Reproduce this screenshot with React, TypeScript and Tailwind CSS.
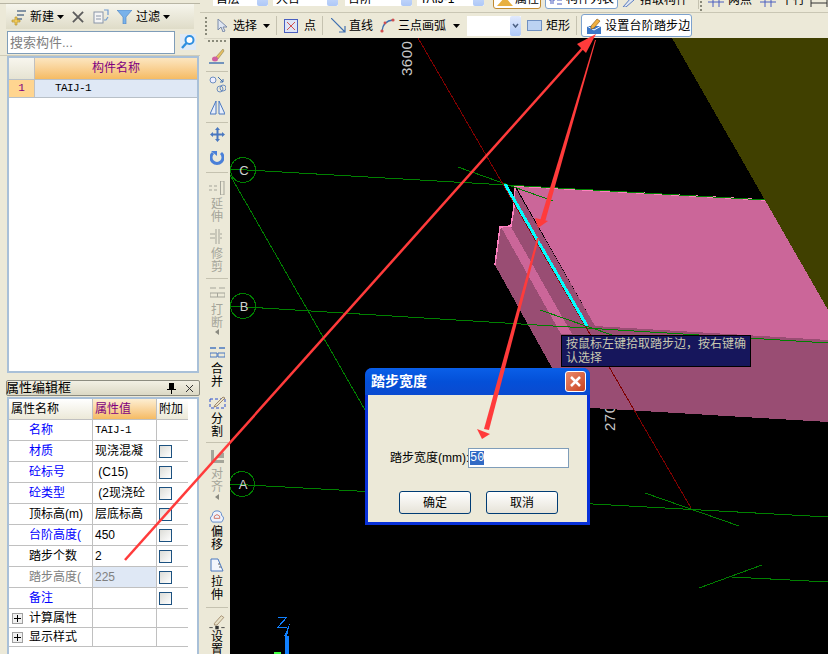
import React from "react";

const Caret = ({ className = "" }: { className?: string }) => (
  <svg width="7" height="4" viewBox="0 0 7 4" className={className}>
    <path d="M0 0h7L3.5 4z" fill="#000" />
  </svg>
);

const Sep = ({ className = "" }: { className?: string }) => <div className={`w-px self-stretch my-[3px] bg-[#c5c2b0] ${className}`} />;

const Grip = () => (
  <svg width="3" height="18" viewBox="0 0 3 18" className="shrink-0">
    {[0, 4, 8, 12, 16].map((y) => (
      <rect key={y} x="0" y={y} width="2" height="2" fill="#8a8a7a" />
    ))}
  </svg>
);

const Combo = ({ text, className }: { text: string; className: string }) => (
  <div className={`h-[20px] bg-white flex items-end justify-between text-[12px] leading-[14px] pl-[3px] ${className}`}>
    <span>{text}</span>
    <div className="w-[11px] h-full bg-gradient-to-b from-[#e1eafe] to-[#aec8f7] rounded-[2px] flex items-center justify-center">
      <svg width="7" height="5" viewBox="0 0 7 5"><path d="M1 1l2.5 3L6 1" fill="none" stroke="#4d6185" strokeWidth="1.5" /></svg>
    </div>
  </div>
);

const Check = () => (
  <div className="w-[13px] h-[13px] border border-[#1c5180] bg-gradient-to-br from-[#dcdcd7] to-white" />
);

const rows: { name: string; value: string; blue?: boolean; check?: boolean; grey?: boolean; mono?: boolean }[] = [
  { name: "名称", value: "TAIJ-1", blue: true, mono: true },
  { name: "材质", value: "现浇混凝", blue: true, check: true },
  { name: "砼标号", value: " (C15)", blue: true, check: true },
  { name: "砼类型", value: " (2现浇砼", blue: true, check: true },
  { name: "顶标高(m)", value: "层底标高", check: true },
  { name: "台阶高度(", value: "450", blue: true, check: true },
  { name: "踏步个数", value: "2", check: true },
  { name: "踏步高度(", value: "225", check: true, grey: true },
  { name: "备注", value: "", blue: true, check: true },
];

const PropPanel = () => (
  <div className="ml-[7px] mr-[1px] flex-1 bg-white border-2 border-b-0 border-[#a9c0d8] text-[12px] overflow-hidden">
    <div className="w-[179px]">
      <div className="flex h-[21px] border-b border-[#c0c0c0]">
        <div className="w-[84px] border-r border-[#c0c0c0] bg-gradient-to-b from-white to-[#ece9d8] pl-[2px] leading-[20px]">属性名称</div>
        <div className="w-[64px] border-r border-[#c0c0c0] bg-gradient-to-b from-[#fdeed2] to-[#f5bb62] pl-[2px] leading-[20px] text-[#800080]">属性值</div>
        <div className="w-[31px] bg-gradient-to-b from-white to-[#ece9d8] pl-[2px] leading-[20px]">附加</div>
      </div>
      {rows.map((r) => (
        <div key={r.name} className="flex h-[21px] border-b border-[#c0c0c0]">
          <div className={`w-[84px] border-r border-[#c0c0c0] pl-[20px] leading-[20px] overflow-hidden whitespace-nowrap ${r.blue ? "text-[#0000ff]" : r.grey ? "text-[#808080]" : "text-black"}`}>{r.name}</div>
          <div className={`w-[64px] border-r border-[#c0c0c0] pl-[2px] leading-[20px] whitespace-pre overflow-hidden ${r.grey ? "bg-[#dfe8f5] text-[#808080]" : "text-black"} ${r.mono ? "font-['Liberation_Mono',monospace] text-[11px] tracking-[-0.6px]" : ""}`}>{r.value}</div>
          <div className="w-[31px] flex items-center pl-[2px]">{r.check && <Check />}</div>
        </div>
      ))}
      {["计算属性", "显示样式"].map((t) => (
        <div key={t} className="flex h-[19px] border-b border-[#c0c0c0]">
          <div className="w-[84px] border-r border-[#c0c0c0] pl-[3px] flex items-center gap-[6px] leading-[18px]">
            <div className="w-[11px] h-[11px] border border-[#a0a0a0] bg-[#f0f0f0] flex items-center justify-center">
              <svg width="7" height="7" viewBox="0 0 7 7"><path d="M0 3.5h7M3.5 0v7" stroke="#000" /></svg>
            </div>
            <span>{t}</span>
          </div>
          <div className="w-[64px] border-r border-[#c0c0c0]" />
          <div className="w-[31px]" />
        </div>
      ))}
    </div>
  </div>
);

const LeftPanel = () => (
  <div className="w-[200px] shrink-0 flex flex-col h-full">
    <div className="h-[4px] border-b border-[#b8b5a4]" />
    <div className="h-[25px] mx-[6px] flex items-center bg-gradient-to-b from-[#f6f5ec] to-[#dfdcc8] text-[12px]">
      <svg width="18" height="18" viewBox="0 0 18 18" className="ml-[4px]">
        <path d="M7 3h9M7 7h7M7 11h5" stroke="#5f7690" strokeWidth="1.5" />
        <path d="M2 12h3v-3h2v3h3v2H7v3H5v-3H2z" fill="#f0cb5e" stroke="#b08a20" strokeWidth=".6" />
      </svg>
      <span className="ml-[2px]">新建</span>
      <Caret className="ml-[3px]" />
      <svg width="12" height="12" viewBox="0 0 13 13" className="ml-[8px]"><path d="M1 1l11 11M12 1L1 12" stroke="#5c5c5c" strokeWidth="2" /></svg>
      <svg width="16" height="15" viewBox="0 0 16 15" className="ml-[9px]">
        <rect x="1" y="3" width="9" height="11" fill="#f4f4f4" stroke="#8a96a8" />
        <path d="M3 7h5M3 10h5" stroke="#8a96a8" />
        <path d="M11 1h4v5M15 8l-2 3h-2" fill="none" stroke="#6f9ad0" strokeWidth="1.2" />
      </svg>
      <svg width="15" height="14" viewBox="0 0 15 14" className="ml-[8px]"><path d="M0 0h15L9 7v7H6V7z" fill="#79b2ea" stroke="#4a7fc0" strokeWidth=".6" /></svg>
      <span className="ml-[4px]">过滤</span>
      <Caret className="ml-[3px]" />
    </div>
    <div className="h-[27px] pl-[7px] flex items-center border-b border-[#cfccb9]">
      <div className="w-[168px] h-[23px] bg-white border border-[#7f9db9] text-[#808080] text-[13px] leading-[21px] pl-[2px]">搜索构件...</div>
      <svg width="16" height="16" viewBox="0 0 16 16" className="ml-[5px]">
        <rect width="16" height="16" fill="#dfeaf6" />
        <circle cx="9.5" cy="6" r="4" fill="#fff" stroke="#2f8fe0" strokeWidth="2" />
        <path d="M6.5 9L2 14" stroke="#2f8fe0" strokeWidth="2.4" />
      </svg>
    </div>
    <div className="ml-[7px] mr-[1px] h-[317px] bg-white border-2 border-[#a9c0d8] text-[12px]">
      <div className="flex h-[21px]">
        <div className="w-[26px] bg-gradient-to-b from-[#f8f6ee] to-[#e6e3d2] border-r border-[#c0c0c0]" />
        <div className="flex-1 bg-gradient-to-b from-[#fce6c0] to-[#f5bb62] text-center text-[#800080] leading-[21px]">构件名称</div>
      </div>
      <div className="flex h-[19px] border-t border-b border-[#b8c0c8]">
        <div className="w-[26px] bg-[#ffd590] text-[#800080] text-center border-r border-[#c0c0c0] font-['Liberation_Mono',monospace] text-[11px] leading-[17px]">1</div>
        <div className="flex-1 bg-[#dfe8f5] pl-[20px] font-['Liberation_Mono',monospace] text-[11px] tracking-[-0.6px] leading-[17px]">TAIJ-1</div>
      </div>
    </div>
    <div className="ml-[6px] mt-[7px] h-[16px] border border-[#8c8c80] rounded-[2px] bg-gradient-to-b from-[#f2f0e4] to-[#dcd9c5] flex items-center text-[13px] leading-[14px]">
      <span className="flex-1 -ml-px">属性编辑框</span>
      <svg width="9" height="11" viewBox="0 0 9 11" className="mr-[9px]"><path d="M2 0h5v6h2v1H5v4H4V7H0V6h2z" fill="#000" /></svg>
      <svg width="9" height="9" viewBox="0 0 9 9" className="mr-[5px]"><path d="M1 1l7 7M8 1L1 8" stroke="#333" /></svg>
    </div>
    <div className="h-[1px]" />
    <PropPanel />
  </div>
);

const Top1 = () => (
  <div className="h-[13px] border-b border-[#c9c6b4] overflow-hidden">
    <div className="flex items-start -mt-[14px] h-[26px] text-[12px] leading-[14px]">
      <Combo text="首层" className="ml-[13px] w-[55px]" />
      <Combo text="大台" className="ml-[5px] w-[65px]" />
      <Combo text="台阶" className="ml-[7px] w-[67px]" />
      <Combo text="TAIJ-1" className="ml-[5px] w-[67px]" />
      <div className="ml-[9px] w-[48px] h-[23px] bg-white border border-[#c08a30] rounded-[3px] flex items-end pb-[2px] pl-[3px]">
        <svg width="16" height="9" viewBox="0 0 16 9"><path d="M0 9l8-9 8 9z" fill="#e8b040" /></svg>
        <span className="ml-[2px]">属性</span>
      </div>
      <div className="ml-[4px] w-[73px] h-[23px] bg-white border border-[#7da2ce] rounded-[3px] flex items-end pb-[2px] pl-[3px]">
        <svg width="14" height="9" viewBox="0 0 14 9"><path d="M1 0h4v4H1zM8 0h5M8 3h5M1 6h4M8 7h5" stroke="#4a5fc0" fill="none" /></svg>
        <span className="ml-[3px]">构件列表</span>
      </div>
      <div className="ml-[4px] w-[76px] h-[23px] flex items-end pb-[2px]">
        <svg width="14" height="9" viewBox="0 0 14 9"><path d="M1 9l8-9 3 2-8 7z" fill="#dfe6f2" stroke="#5b7cc0" /></svg>
        <span className="ml-[4px]">拾取构件</span>
      </div>
      <Sep className="ml-0" />
      <span className="ml-[1px] mt-[15px]"><Grip /></span>
      <div className="ml-[5px] w-[16px] h-[23px] flex items-end pb-[2px]"><svg width="16" height="8" viewBox="0 0 16 8"><path d="M0 3h16M5 0v8M11 0v8" stroke="#4a5fc0" /></svg></div>
      <div className="ml-[4px] h-[23px] flex items-end pb-[2px]">两点</div>
      <div className="ml-[8px] w-[16px] h-[23px] flex items-end pb-[2px]"><svg width="16" height="8" viewBox="0 0 16 8"><path d="M0 3h16M5 0v8M11 0v8" stroke="#4a5fc0" /></svg></div>
      <div className="ml-[5px] h-[23px] flex items-end pb-[2px]">平行</div>
      <div className="ml-[5px] w-[18px] h-[23px] flex items-end pb-[2px]"><svg width="18" height="8" viewBox="0 0 18 8"><path d="M1 0v8M17 0v8M1 4h16" stroke="#333" /></svg></div>
    </div>
  </div>
);

const Top2 = () => (
  <div className="h-[25px] flex items-center text-[12px] pl-[5px]">
    <Grip />
    <svg width="10" height="13" viewBox="0 0 10 13" className="ml-[9px]"><path d="M1 0v11l3-3 2 5 2-1-2-4h4z" fill="#dfe6f2" stroke="#7b8aa8" /></svg>
    <span className="ml-[6px]">选择</span>
    <Caret className="ml-[6px]" />
    <Sep className="ml-[6px]" />
    <svg width="14" height="14" viewBox="0 0 14 14" className="ml-[7px]">
      <rect x=".5" y=".5" width="13" height="13" fill="#dde4f6" stroke="#4a5fc0" />
      <path d="M3 3l8 8M11 3l-8 8" stroke="#d05050" />
    </svg>
    <span className="ml-[6px]">点</span>
    <Sep className="ml-[6px]" />
    <svg width="15" height="15" viewBox="0 0 15 15" className="ml-[8px]"><path d="M0 0l14 14M14 8v6H8" fill="none" stroke="#3e6fb0" strokeWidth="1.2" /></svg>
    <span className="ml-[3px]">直线</span>
    <svg width="15" height="15" viewBox="0 0 15 15" className="ml-[7px]">
      <path d="M2 13Q3 3 13 2" fill="none" stroke="#3e6fb0" strokeWidth="1.3" />
      <circle cx="2" cy="13" r="1.6" fill="#d05050" /><circle cx="13" cy="2" r="1.6" fill="#d05050" /><circle cx="5" cy="5" r="1.4" fill="#d05050" />
    </svg>
    <span className="ml-[3px]">三点画弧</span>
    <Caret className="ml-[7px]" />
    <Combo text="" className="ml-[7px] w-[54px]" />
    <svg width="15" height="11" viewBox="0 0 15 11" className="ml-[6px]"><rect x=".5" y=".5" width="14" height="10" fill="#bcd2f2" stroke="#6f8fc0" /></svg>
    <span className="ml-[4px]">矩形</span>
    <Sep className="ml-[6px]" />
    <div className="ml-[4px] w-[111px] h-[23px] bg-white border border-[#7da2ce] rounded-[3px] flex items-center pl-[5px]">
      <svg width="14" height="16" viewBox="0 0 14 16">
        <rect x="0" y="8" width="14" height="8" fill="#3c78c8" />
        <path d="M0 8l7 4 7-4" fill="none" stroke="#fff" />
        <path d="M4 8l6-7 3 2-6 7-3 1z" fill="#f0b040" stroke="#805010" strokeWidth=".6" />
      </svg>
      <span className="ml-[4px] whitespace-nowrap tracking-[0.2px]">设置台阶踏步边</span>
    </div>
  </div>
);

const VChars = ({ text, muted, className = "" }: { text: string; muted?: boolean; className?: string }) => (
  <div className={`flex flex-col items-center text-[12px] leading-[12.5px] ${muted ? "text-[#a5a59a]" : "text-black"} ${className}`}>
    {text.split("").map((c) => (
      <span key={c}>{c}</span>
    ))}
  </div>
);

const VSep = ({ className }: { className: string }) => <div className={`h-px w-[22px] shrink-0 bg-[#c5c2b0] ${className}`} />;

const VCaret = ({ className }: { className: string }) => (
  <svg width="4" height="6" viewBox="0 0 4 6" className={className}><path d="M4 0v6L0 3z" fill="#8a8a80" /></svg>
);

const SideBar = () => (
  <div className="w-[26px] shrink-0 flex flex-col items-center overflow-hidden h-full border-t border-[#d8d5c4] [&>*]:shrink-0">
    <div className="mt-[1px] flex gap-[2px]">
      {[0, 1, 2, 3, 4].map((i) => (<div key={i} className="w-[2px] h-[2px] bg-[#8a8a7a]" />))}
    </div>
    <svg width="16" height="16" viewBox="0 0 16 16" className="mt-[6px]">
      <path d="M14 1L7 9l2 2 6-8z" fill="#e8c060" stroke="#8a8050" strokeWidth=".6" />
      <ellipse cx="6" cy="11" rx="3" ry="2.5" fill="#d060a0" />
      <path d="M0 15h15" stroke="#3e6fb0" strokeWidth="1.4" />
    </svg>
    <VSep className="mt-[7px]" />
    <svg width="17" height="17" viewBox="0 0 17 17" className="mt-[4px]">
      <circle cx="4" cy="4" r="3" fill="#eef" stroke="#6f8fc0" /><circle cx="11" cy="13" r="3" fill="none" stroke="#6f8fc0" /><circle cx="14" cy="12" r="3" fill="none" stroke="#6f8fc0" />
      <path d="M9 1l5 5M14 3v3h-3" fill="none" stroke="#3e6fb0" />
    </svg>
    <svg width="15" height="14" viewBox="0 0 15 14" className="mt-[8px]">
      <path d="M6 0v13H0zM9 0v13h6z" fill="#e8eefa" stroke="#4a78c0" />
    </svg>
    <VSep className="mt-[7px]" />
    <svg width="15" height="15" viewBox="0 0 15 15" className="mt-[4px]">
      <path d="M7.5 0l2.5 3H8.500v3.500H12V5l3 2.500L12 10V8.500H8.500V12H10l-2.500 3L5 12h1.500V8.500H3V10L0 7.500 3 5v1.500h3.500V3H5z" fill="#4a78c0" />
    </svg>
    <svg width="14" height="14" viewBox="0 0 14 14" className="mt-[9px]">
      <path d="M3 2A6 6 0 1 0 11 2" fill="none" stroke="#4a80d8" strokeWidth="3" /><path d="M1 0h6v5z" fill="#4a80d8" />
    </svg>
    <VSep className="mt-[7px]" />
    <svg width="16" height="14" viewBox="0 0 16 14" className="mt-[8px]">
      <path d="M11.500 0v14M15 0v14M11.500 0H15M11.500 14H15M0 5h3M5 5h3M0 9h3M5 9h3" stroke="#a5a59a" fill="none" />
    </svg>
    <VChars text="延伸" muted className="mt-[3px]" />
    <svg width="15" height="15" viewBox="0 0 15 15" className="mt-[6px]">
      <path d="M6 0v15M9 0v15M0 5h5M10 5h2M0 9h5M10 9h2" stroke="#a5a59a" fill="none" />
    </svg>
    <VChars text="修剪" muted className="mt-[4px]" />
    <VSep className="mt-[5px]" />
    <svg width="15" height="12" viewBox="0 0 15 12" className="mt-[7px]">
      <path d="M0 2h6M15 2H9M0 7h15v4H0zM7.500 7v4" stroke="#a5a59a" fill="none" />
    </svg>
    <VChars text="打断" muted className="mt-[6px]" />
    <VCaret className="mt-0" />
    <svg width="15" height="12" viewBox="0 0 15 12" className="mt-[11px]">
      <path d="M0 2h6M15 2H9" stroke="#4a78c0" strokeWidth="1.500" /><path d="M0 7h7v4H0zM8 7h7v4H8z" fill="none" stroke="#4a78c0" />
    </svg>
    <VChars text="合并" className="mt-[5px]" />
    <svg width="17" height="15" viewBox="0 0 17 15" className="mt-[6px]">
      <rect x="1" y="5" width="15" height="9" fill="none" stroke="#2a4fd0" strokeDasharray="3 2" />
      <path d="M6 11l8-8 2 1-8 8-3 1z" fill="#e8e2c8" stroke="#806040" strokeWidth=".7" />
    </svg>
    <VChars text="分割" className="mt-[4px]" />
    <VSep className="mt-[4px]" />
    <svg width="13" height="13" viewBox="0 0 13 13" className="mt-[7px]">
      <path d="M0 0h3v10h10v3H0zM5 8l6-6 2 1v5z" fill="#a5a59a" />
    </svg>
    <VChars text="对齐" muted className="mt-[5px]" />
    <VCaret className="mt-[1px]" />
    <svg width="16" height="14" viewBox="0 0 16 15" className="mt-[9px]">
      <path d="M3 14Q-1 9 3 7q0-5 5-5t5 5q4 2 0 7z" fill="#eef2fb" stroke="#5b86c8" />
      <path d="M5 10Q4 7 8 6q4 1 3 4z" fill="none" stroke="#d07060" />
    </svg>
    <VChars text="偏移" className="mt-[3px]" />
    <svg width="14" height="14" viewBox="0 0 14 14" className="mt-[7px]">
      <path d="M1 1h7l5 12H1z" fill="#f4f6fb" stroke="#4a78c0" /><path d="M8 6h2M9 9h2" stroke="#666" />
    </svg>
    <VChars text="拉伸" className="mt-[4px]" />
    <VSep className="mt-[6px]" />
    <svg width="20" height="17" viewBox="0 0 20 20" className="mt-[6px]">
      <path d="M7 11l8-9 3 2-8 9H7z" fill="#e8e2c8" stroke="#806040" strokeWidth=".7" />
      <path d="M1 16h4M15 16h4" stroke="#333" /><rect x="8" y="14" width="4" height="4" fill="#333" />
    </svg>
    <VChars text="设置" />
  </div>
);

const Marker = ({ x, y, label }: { x: number; y: number; label: string }) => (
  <g>
    <circle cx={x} cy={y} r="12.500" fill="none" stroke="#008000" />
    <text x={x + 1} y={y + 5} textAnchor="middle" fontSize="13" fill="#d0d0d0" fontFamily="'Liberation Sans', sans-serif">{label}</text>
  </g>
);

const Canvas3D = () => (
  <svg viewBox="230 38 598 616" className="block w-full h-full" shapeRendering="crispEdges">
    <rect x="230" y="38" width="598" height="616" fill="#000" />
    <polygon points="672,38 828,38 828,310" fill="#404000" />
    <text transform="translate(412 76) rotate(-90)" fontSize="15" fill="#c8c8c8" letterSpacing="0.5" fontFamily="'Liberation Sans', sans-serif">3600</text>
    <text transform="translate(615 431) rotate(-90)" fontSize="15" fill="#c8c8c8" letterSpacing="0.5" fontFamily="'Liberation Sans', sans-serif">2700</text>
    <polygon points="515,187 511,226 500,227 495,265 552,368 575,407 828,422 828,340 595,326" fill="#994d73" />
    <polygon points="515,185 765,200 828,310 828,340 595,326" fill="#cb6699" />
    <polygon points="501,227 511,227 572,334 561,334" fill="#cb6699" />
    <polyline points="515,186 514,207 511,226 500,227 495,265" fill="none" stroke="#ff80c0" strokeWidth="1.500" />
    <path d="M515 186L765 200" stroke="#ff80c0" strokeWidth="1.500" />
    <g fill="none" stroke="#008000" strokeWidth="1">
      <path d="M230 169L765 200" />
      <path d="M230 306L828 343" />
      <path d="M230 484L828 517" />
      <path d="M230 175L365 410" />
      <path d="M458 167L553 201" />
      <path d="M540 310L612 335" />
      <path d="M645 493L739 526" />
      <path d="M699 588L762 565" />
      <path d="M732 577L828 582" />
    </g>
    <path d="M418 38L691 508" stroke="#800000" strokeWidth="1" />
    <path d="M505 184L587 326" stroke="#00ffff" strokeWidth="3" />
    <Marker x={243} y={170} label="C" />
    <Marker x={243} y={306} label="B" />
    <Marker x={242} y={484} label="A" />
    <path d="M278 617h9l-9 10h9" fill="none" stroke="#1080ff" />
    <path d="M287 654V636" stroke="#1080ff" strokeWidth="4" />
    <path d="M290 623l-3 13h-3z" fill="#1080ff" />
    <rect x="274" y="652" width="7" height="2" fill="#40ff40" />
  </svg>
);

const Arrows = () => (
  <svg viewBox="0 0 828 654" className="absolute inset-0 w-full h-full pointer-events-none">
    <path d="M125 560L590 40" stroke="#ff3b3b" strokeWidth="2.500" />
    <polygon points="596,34 577,44 586,53" fill="#ff3b3b" />
    <polygon points="595,40 596,40 545,222 540,221" fill="#ff3b3b" />
    <polygon points="538,228 535,218 548,221" fill="#ff3b3b" />
    <polygon points="537,238 539,238 489,430 484,429" fill="#ff3b3b" />
    <polygon points="482,439 477,429 490,434" fill="#ff3b3b" />
  </svg>
);

const Dialog = () => (
  <div className="absolute left-[135px] top-[330px] w-[225px] h-[157px] bg-[#0831d9] rounded-t-[7px] p-[3px] pt-0 flex flex-col text-[12px]">
    <div className="h-[27px] -mx-[3px] rounded-t-[7px] bg-gradient-to-b from-[#0a5fe8] via-[#0450d8] to-[#0a4ad0] flex items-center justify-between pl-[6px] pr-[4px]">
      <span className="text-white font-bold text-[14px]">踏步宽度</span>
      <div className="w-[21px] h-[21px] rounded-[3px] bg-gradient-to-br from-[#e98a6c] to-[#c8401a] border border-white flex items-center justify-center">
        <svg width="13" height="13" viewBox="0 0 13 13"><path d="M2 2l9 9M11 2l-9 9" stroke="#fff" strokeWidth="2.500" /></svg>
      </div>
    </div>
    <div className="flex-1 bg-[#ece9d8] flex flex-col">
      <div className="mt-[53px] ml-[22px] flex items-center h-[20px]">
        <span className="w-[78px] whitespace-nowrap">踏步宽度(mm):</span>
        <div className="w-[101px] h-[20px] bg-white border border-[#7f9db9] pl-px flex items-center">
          <span className="bg-[#316ac5] text-white leading-[14px] font-['Liberation_Mono',monospace] text-[12px]">50</span>
        </div>
      </div>
      <div className="mt-[23px] ml-[31px] flex gap-[15px]">
        {["确定", "取消"].map((t) => (
          <div key={t} className="w-[72px] h-[23px] rounded-[3px] border border-[#003c74] bg-gradient-to-b from-white to-[#e6e3d8] flex items-center justify-center">{t}</div>
        ))}
      </div>
    </div>
  </div>
);

const Tooltip = () => (
  <div className="absolute left-[331px] top-[297px] w-[190px] h-[32px] bg-[#16165c] border border-black text-[#c8c8b0] text-[12px] leading-[14px] px-[4px] pt-[1px]">
    按鼠标左键拾取踏步边，按右键确认选择
  </div>
);

export default function App() {
  return (
    <div className="relative w-[828px] h-[654px] overflow-hidden bg-[#ece9d8] text-black flex font-['Liberation_Sans','Noto_Sans_CJK_SC',sans-serif]">
      <LeftPanel />
      <div className="flex-1 min-w-0 flex flex-col pl-0">
        <Top1 />
        <Top2 />
        <div className="flex flex-1 min-h-0 pl-[4px]">
          <SideBar />
          <div className="relative flex-1 min-w-0">
            <Canvas3D />
            <Tooltip />
            <Dialog />
          </div>
        </div>
      </div>
      <Arrows />
    </div>
  );
}
